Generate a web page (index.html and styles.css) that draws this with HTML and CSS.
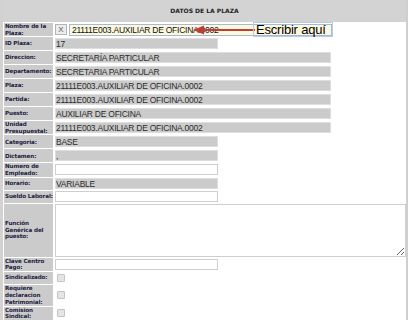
FILE: index.html
```html
<!DOCTYPE html>
<html lang="es">
<head>
  <meta charset="UTF-8" />
  <title>Datos de la Plaza</title>
  <link rel="stylesheet" href="styles.css">
</head>
<body>
  <div class="panel">
    <div class="panel-title">DATOS DE LA PLAZA</div>

    <table class="form">
      <tr>
        <td class="lbl">Nombre de la Plaza:</td>
        <td class="val">
          <div class="name-field">
            <button class="btn-x">X</button>
            <input type="text" class="inp-name" value="21111E003.AUXILIAR DE OFICINA.0002" />
          </div>
        </td>
      </tr>
      <tr><td class="lbl">ID Plaza:</td><td class="val"><input class="ro short" value="17" readonly /></td></tr>
      <tr><td class="lbl">Direccion:</td><td class="val"><input class="ro" value="SECRETARÍA PARTICULAR" readonly /></td></tr>
      <tr><td class="lbl">Departamento:</td><td class="val"><input class="ro" value="SECRETARIA PARTICULAR" readonly /></td></tr>
      <tr><td class="lbl">Plaza:</td><td class="val"><input class="ro" value="21111E003.AUXILIAR DE OFICINA.0002" readonly /></td></tr>
      <tr><td class="lbl">Partida:</td><td class="val"><input class="ro" value="21111E003.AUXILIAR DE OFICINA.0002" readonly /></td></tr>
      <tr><td class="lbl">Puesto:</td><td class="val"><input class="ro" value="AUXILIAR DE OFICINA" readonly /></td></tr>
      <tr><td class="lbl">Unidad Presupuestal:</td><td class="val"><input class="ro" value="21111E003.AUXILIAR DE OFICINA.0002" readonly /></td></tr>
      <tr><td class="lbl">Categoria:</td><td class="val"><input class="ro short" value="BASE" readonly /></td></tr>
      <tr><td class="lbl">Dictamen:</td><td class="val"><input class="ro short" value="," readonly /></td></tr>
      <tr><td class="lbl">Numero de Empleado:</td><td class="val"><input class="txt" /></td></tr>
      <tr class="r12"><td class="lbl">Horario:</td><td class="val"><input class="ro short" value="VARIABLE" readonly /></td></tr>
      <tr class="r12"><td class="lbl">Sueldo Laboral:</td><td class="val"><input class="txt" /></td></tr>
      <tr class="r-area"><td class="lbl">Función Genérica del puesto:</td><td class="val"><textarea class="area"></textarea></td></tr>
      <tr class="r12"><td class="lbl">Clave Centro Pago:</td><td class="val"><input class="txt" /></td></tr>
      <tr class="r12"><td class="lbl">Sindicalizado:</td><td class="val"><span class="chk"></span></td></tr>
      <tr class="r3"><td class="lbl">Requiere declaracion Patrimonial:</td><td class="val"><span class="chk"></span></td></tr>
      <tr><td class="lbl">Comision Sindical:</td><td class="val"><span class="chk"></span></td></tr>
    </table>

    <svg class="arrow" width="64" height="12" viewBox="0 0 64 12">
      <line x1="8" y1="6" x2="62" y2="6" stroke="#bd3f3a" stroke-width="2" />
      <polygon points="0,6 11,1.5 11,10.5" fill="#bd3f3a" />
    </svg>
    <div class="hint">Escribir aquí</div>
  </div>
</body>
</html>
```

FILE: styles.css
```css
body {
  margin: 0;
  background: #fff;
  font-family: "Liberation Sans", Arial, sans-serif;
}

.panel {
  position: relative;
  width: 403px;
  border-left: 3px solid #d2d2d2;
  border-right: 2px solid #cfcfcf;
  border-bottom: 1px solid #cfcfcf;
}

.panel-title {
  height: 22px;
  line-height: 22px;
  background: #d3d3d3;
  text-align: center;
  font-family: "DejaVu Sans", Verdana, sans-serif;
  font-size: 6px;
  font-weight: bold;
  color: #222;
}

.form {
  width: 403px;
  border-collapse: separate;
  border-spacing: 1px 1px;
  table-layout: fixed;
}

.form td {
  height: 13px;
  padding: 0;
  vertical-align: middle;
}

.form .r12 td {
  height: 12px;
}

.form .r3 td {
  height: 21px;
}

.form .r-area td {
  height: 53px;
}

.lbl {
  width: 48px;
  background: #cbcbcb;
  padding-left: 1px !important;
  font-family: "DejaVu Sans", Verdana, sans-serif;
  font-size: 5.6px;
  font-weight: bold;
  line-height: 6.6px;
  color: #1d2040;
  letter-spacing: -0.1px;
}

.val {
  padding-left: 1px !important;
}

input {
  display: block;
  box-sizing: border-box;
  margin: 0;
  height: 11px;
  padding: 0 1px 0 0;
  font-family: "Liberation Sans", Arial, sans-serif;
  font-size: 8.5px;
  letter-spacing: -0.25px;
  color: #2b2b2b;
  outline: none;
}

.ro {
  width: 276px;
  background: #cbcbcb;
  border: 1px solid #dedede;
}

.ro.short {
  width: 163px;
}

.txt {
  width: 163px;
  background: #fff;
  border: 1px solid #cfcfcf;
}

.name-field {
  display: flex;
  align-items: center;
  gap: 2px;
}

.btn-x {
  width: 12px;
  height: 11px;
  margin: 0;
  padding: 0;
  background: #ececec;
  border: 1px solid #b5b5b5;
  font-family: "Liberation Sans", Arial, sans-serif;
  font-size: 8px;
  color: #555;
}

.inp-name {
  width: 263px;
  height: 12px;
  padding-left: 2px;
  background: #fdf7dc;
  border: 1px solid #9fbbdc;
  color: #111;
}

.area {
  display: block;
  box-sizing: border-box;
  width: 351px;
  height: 53px;
  margin: 0;
  border: 1px solid #cfcfcf;
  resize: both;
}

.chk {
  display: block;
  width: 6px;
  height: 6px;
  margin-left: 2px;
  background: #e4e4e4;
  border: 1px solid #c4c4c4;
  border-radius: 1px;
}

.arrow {
  position: absolute;
  left: 190px;
  top: 24px;
}

.hint {
  position: absolute;
  left: 250px;
  top: 22px;
  width: 76px;
  height: 13px;
  padding-left: 2px;
  border: 1px solid #b6cbe6;
  font-size: 13px;
  line-height: 14px;
  letter-spacing: -0.2px;
  color: #000;
}
```
